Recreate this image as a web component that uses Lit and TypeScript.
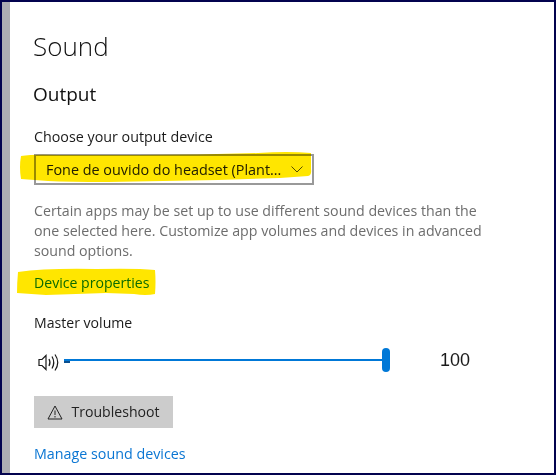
import { LitElement, html, css } from "lit";
import { customElement } from "lit/decorators.js";

@customElement("app-root")
export class AppRoot extends LitElement {
  static styles = css`
    :host {
      display: block;
      width: 556px;
      height: 475px;
      box-sizing: border-box;
      border: 2px solid #03034f;
      background: #fff;
      overflow: hidden;
      font-family: "Open Sans", "Noto Sans", sans-serif;
      color: #1a1a1a;
    }
    .frame { display: flex; height: 100%; background: #fff; }
    .rail { width: 8px; flex: none; background: #adadb3; }
    .content {
      flex: 1;
      min-width: 0;
      padding: 25px 0 0 24px;
      display: flex;
      flex-direction: column;
      align-items: flex-start;
      font-size: 14.1px;
      line-height: 20px;
    }
    h1 {
      margin: 0 0 0 -1px;
      font-size: 26px;
      font-weight: 300;
      line-height: 38px;
      color: #111;
    }
    h2 {
      margin: 16px 0 0 -1px;
      font-size: 19px;
      font-weight: 400;
      line-height: 26px;
      color: #111;
    }
    .label { margin-top: 20px; font-size: 14.3px; }
    .select {
      margin-top: 7px;
      width: 280px;
      height: 31px;
      box-sizing: border-box;
      border: 2px solid #999;
      display: flex;
      align-items: center;
      justify-content: space-between;
      padding: 0 9px 0 10px;
      position: relative;
      font-size: 14.4px;
      color: #222;
    }
    .marker { position: absolute; mix-blend-mode: multiply; pointer-events: none; }
    .select .marker { left: -18px; top: -7px; }
    .help {
      margin: 16px 0 0;
      width: 470px;
      font-size: 14.2px;
      color: #6d6d6d;
      line-height: 20px;
    }
    .device {
      position: relative;
      margin-top: 12px;
      color: #0a76d3;
    }
    .device .marker { left: -18px; top: -6px; }
    .mv { margin-top: 20px; }
    .slider { display: flex; align-items: center; margin-top: 15px; height: 24px; }
    .spk { margin: 6px 0 0 4px; width: 22px; height: 22px; flex: none; }
    .track {
      margin-left: 4px;
      width: 326px;
      position: relative;
      height: 2px;
      background: #0078d7;
    }
    .stub { position: absolute; left: 0; top: 2px; width: 6px; height: 2px; background: #0a4f8f; }
    .thumb {
      position: absolute;
      right: 0;
      top: -11px;
      width: 8px;
      height: 24px;
      border-radius: 4px;
      background: #0078d7;
    }
    .value { margin-left: 50px; font: 18px/24px "Liberation Sans", sans-serif; color: #1a1a1a; }
    .btn {
      margin-top: 24px;
      width: 139px;
      height: 32px;
      background: #ccc;
      display: flex;
      align-items: center;
      justify-content: center;
      gap: 8px;
      color: #222;
      box-sizing: border-box;
    }
    .manage { margin-top: 16px; color: #0a76d3; font-size: 14.3px; }
  `;

  render() {
    return html`
      <div class="frame">
        <div class="rail"></div>
        <div class="content">
          <h1>Sound</h1>
          <h2>Output</h2>
          <div class="label">Choose your output device</div>
          <div class="select">
            <span>Fone de ouvido do headset (Plant...</span>
            <svg width="12" height="7" viewBox="0 0 12 7">
              <path d="M0.5 0.5 L6 6 L11.5 0.5" fill="none" stroke="#555" stroke-width="1" />
            </svg>
            <svg class="marker" width="296" height="36" viewBox="0 0 296 36">
              <path fill="#ffe600" d="M3 7 Q1 18 3 30 L30 32 Q50 33 90 33 L200 31 L262 29 L290 27 Q294 26 293 20 L293 4 Q270 2 240 4 Q180 6 120 6 L40 6 Q15 5 3 7 Z" />
            </svg>
          </div>
          <p class="help">
            Certain apps may be set up to use different sound devices than the<br />
            one selected here. Customize app volumes and devices in advanced<br />
            sound options.
          </p>
          <div class="device">
            <span>Device properties</span>
            <svg class="marker" width="142" height="30" viewBox="0 0 142 30">
              <path fill="#ffe600" d="M2 5 Q1 16 1 26 L30 28 L90 26 L118 27 Q130 29 139 27 Q140 15 139 3 Q120 1 80 2 Q30 1 2 5 Z" />
            </svg>
          </div>
          <div class="mv">Master volume</div>
          <div class="slider">
            <svg class="spk" viewBox="0 0 22 22" fill="none" stroke="#1a1a1a" stroke-width="1.2">
              <path d="M1 7.5 H4 L8 3.5 V17.5 L4 13.5 H1 Z" />
              <path d="M11 7 Q13 10.5 11 14" />
              <path d="M14 4.5 Q17.5 10.5 14 16.5" />
              <path d="M17 2.5 Q22.5 10.5 17 18.5" />
            </svg>
            <div class="track">
              <div class="stub"></div>
              <div class="thumb"></div>
            </div>
            <div class="value">100</div>
          </div>
          <div class="btn">
            <svg width="16" height="15" viewBox="0 0 16 15" fill="none" stroke="#222" stroke-width="1">
              <path d="M8 1 L15 14 H1 Z" />
              <path d="M8 5.5 V10 M8 11 V12.5" />
            </svg>
            <span>Troubleshoot</span>
          </div>
          <div class="manage">Manage sound devices</div>
        </div>
      </div>
    `;
  }
}
